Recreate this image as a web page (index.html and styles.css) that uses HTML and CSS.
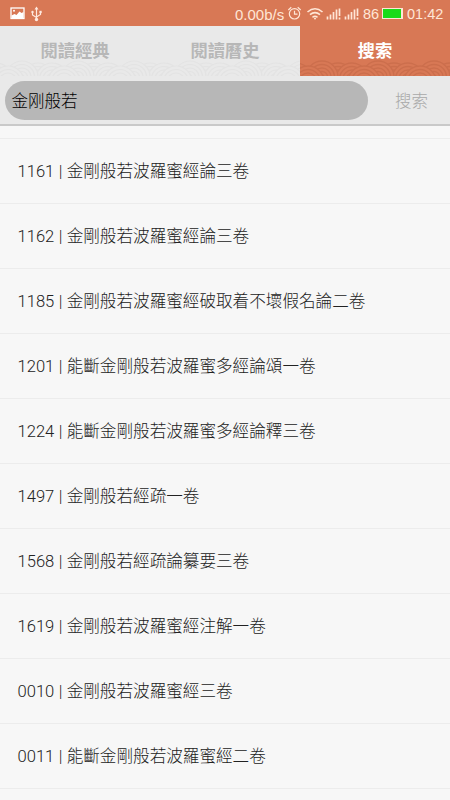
FILE: index.html
```html
<!DOCTYPE html>
<html lang="zh-Hant">
<head>
<meta charset="utf-8">
<title>搜索</title>
<link rel="stylesheet" href="styles.css">
</head>
<body>
<header class="status">
  <svg class="left-icons" width="34" height="18" viewBox="0 0 34 18">
    <rect x="1" y="3" width="13" height="10.500" fill="none" stroke="#fff" stroke-width="1.3"/>
    <path d="M1.500 13V10.500l3-1.500 2 1 3-3.500 2 1.500 2-1v6z" fill="#fff"/>
    <circle cx="4" cy="5.800" r="1" fill="#fff"/>
    <path d="M26.500 3v12M22.500 7v3l4 2.500M30.500 7v2.500l-4 2.500" fill="none" stroke="#ffe9df" stroke-width="1.200"/>
    <path d="M24.500 4.500l2-3 2 3z" fill="#ffe9df"/>
    <circle cx="26.500" cy="14.500" r="1.700" fill="#ffe9df"/><circle cx="22.500" cy="7" r="1.200" fill="#ffe9df"/><rect x="29.400" y="5.800" width="2.300" height="2.300" fill="#ffe9df"/>
  </svg>
  <span class="speed">0.00b/s</span>
  <svg class="right-icons" width="74" height="18" viewBox="0 0 74 18" fill="none" stroke="#ffe6d6" stroke-width="1.200">
    <circle cx="7.500" cy="8.800" r="5.200"/><path d="M7.500 5.800v3.300h3M1.300 5l3-2.700M10.700 2.300l3 2.700"/>
    <path d="M20.500 7q7.500-6.500 15 0M23 9.700q5-4.200 10 0M25.500 12.300q2.500-2 5 0" stroke-width="1.600"/>
    <circle cx="28" cy="13.500" r="1" fill="#ffe6d6" stroke="none"/>
    <path d="M40.500 14.500v-3M43.500 14.500V9.500M46.500 14.500V7M49.500 14.500V4.500M52.500 11V3.500M52.500 14.500v-2M58.500 14.500v-3M61.500 14.500V9.500M64.500 14.500V7M67.500 14.500V4.500M70.500 11V3.500M70.500 14.500v-2" stroke-width="1.700"/>
  </svg>
  <span class="level">86</span>
  <span class="battery"></span>
  <span class="clock">01:42</span>
</header>
<nav class="tabs">
  <svg class="waves" width="450" height="16" viewBox="0 0 450 16">
    <defs>
      <g id="fan"><circle r="16"/><circle r="12.500"/><circle r="9"/><circle r="5.500"/><circle r="2"/></g>
      <pattern id="wave" width="56" height="16" patternUnits="userSpaceOnUse">
        <g class="fans"><use href="#fan" x="38" y="19"/><use href="#fan" x="-4" y="19"/><use href="#fan" x="52" y="19"/><use href="#fan" x="22" y="17"/><use href="#fan" x="8" y="22"/><use href="#fan" x="64" y="22"/></g>
      </pattern>
    </defs>
    <rect width="450" height="16" fill="url(#wave)"/>
  </svg>
  <a class="tab">閱讀經典</a>
  <a class="tab">閱讀曆史</a>
  <a class="tab active">搜索
    <svg class="waves" width="150" height="16" viewBox="0 0 150 16">
      <defs>
        <pattern id="wave-active" width="56" height="16" patternUnits="userSpaceOnUse">
          <g class="fans-active"><use href="#fan" x="38" y="19"/><use href="#fan" x="-4" y="19"/><use href="#fan" x="52" y="19"/><use href="#fan" x="22" y="17"/><use href="#fan" x="8" y="22"/><use href="#fan" x="64" y="22"/></g>
        </pattern>
      </defs>
      <rect width="150" height="16" fill="url(#wave-active)"/>
    </svg>
  </a>
</nav>
<section class="search">
  <div class="field">金刚般若</div>
  <div class="go">搜索</div>
</section>
<main class="list">
  <div class="row">1161 | 金剛般若波羅蜜經論三卷</div>
  <div class="row">1162 | 金剛般若波羅蜜經論三卷</div>
  <div class="row">1185 | 金剛般若波羅蜜經破取着不壞假名論二卷</div>
  <div class="row">1201 | 能斷金剛般若波羅蜜多經論頌一卷</div>
  <div class="row">1224 | 能斷金剛般若波羅蜜多經論釋三卷</div>
  <div class="row">1497 | 金剛般若經疏一卷</div>
  <div class="row">1568 | 金剛般若經疏論纂要三卷</div>
  <div class="row">1619 | 金剛般若波羅蜜經注解一卷</div>
  <div class="row">0010 | 金剛般若波羅蜜經三卷</div>
  <div class="row">0011 | 能斷金剛般若波羅蜜經二卷</div>
</main>
</body>
</html>
```
FILE: styles.css
```css
* { box-sizing: border-box; }
body {
  margin: 0;
  width: 450px;
  height: 800px;
  overflow: hidden;
  background: #f7f7f7;
  font-family: Roboto, "Noto Sans CJK SC", sans-serif;
}
.status {
  display: flex;
  align-items: center;
  height: 26px;
  padding: 1px 7px 0 10px;
  background: #d87855;
  color: #ffe6d6;
  font-family: "Liberation Sans", sans-serif;
  font-size: 14.5px;
  white-space: nowrap;
}
.left-icons, .right-icons { flex: none; }
.speed { margin-left: auto; width: 52px; font-size: 15px; }
.speed, .level, .clock { padding-top: 1px; }
.right-icons { margin-right: 2px; }
.level { width: 18px; }
.battery {
  width: 21px;
  height: 11px;
  margin: 0 4px 0 1px;
  background: #19db19;
  border: 1px solid #ffe6d6;
  border-right-width: 2px;
}
.clock { width: 36px; }
.tabs {
  position: relative;
  display: flex;
  height: 50px;
  background: #e9e9e9;
}
.tab {
  position: relative;
  flex: 1;
  color: #b7b7b7;
  font-size: 17.3px;
  font-weight: 700;
  line-height: 51px;
  text-align: center;
}
.tab.active { background: #d87855; color: #fff; }
.waves { position: absolute; left: 0; bottom: 0; }
.fans { fill: #e9e9e9; stroke: #e3e3e3; stroke-width: 1.2; }
.fans-active { fill: #d87855; stroke: #cc6e4c; stroke-width: 1.4; }
.search {
  display: flex;
  align-items: center;
  height: 50px;
  padding-left: 5px;
  background: #e9e9e9;
  border-bottom: 2px solid #c9c9c9;
}
.field {
  width: 363px;
  height: 39px;
  padding-left: 6.5px;
  border-radius: 20px;
  background: #b7b7b7;
  color: #000;
  font-size: 16.5px;
  font-weight: 300;
  line-height: 41px;
}
.go { flex: 1; padding-left: 5px; text-align: center; color: #a8a8a8; font-size: 16.5px; font-weight: 300; }
.list { padding-top: 12px; }
.row {
  height: 65px;
  padding-left: 17.5px;
  border-top: 1px solid #ececec;
  color: #222;
  font-size: 16.6px;
  font-weight: 300;
  line-height: 65px;
  word-spacing: 0.3px;
  white-space: nowrap;
}
.row:last-child { height: 66px; border-bottom: 1px solid #ececec; }
```
